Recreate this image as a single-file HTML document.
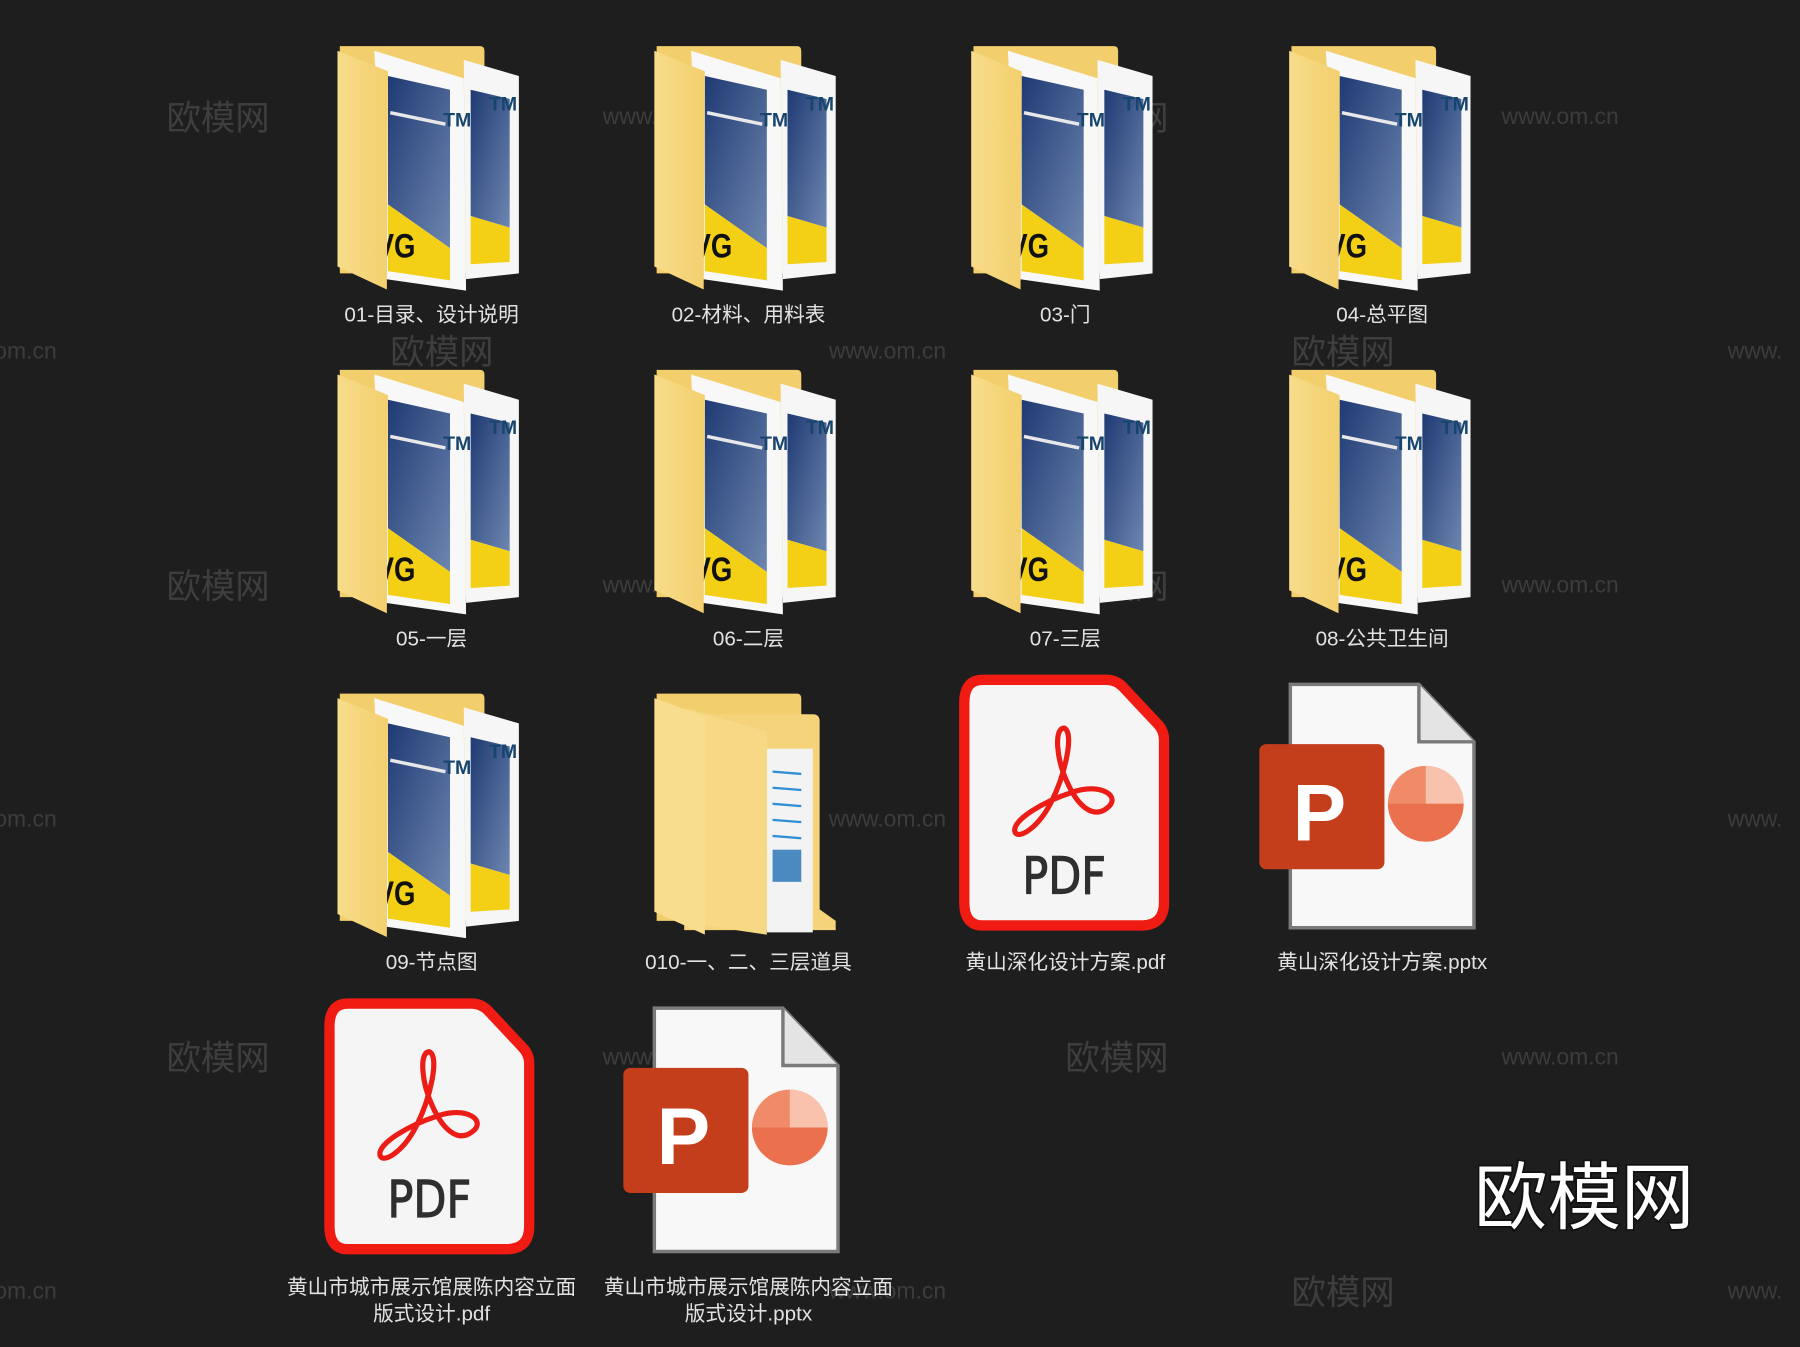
<!DOCTYPE html>
<html><head><meta charset="utf-8"><style>
html,body{margin:0;padding:0;background:#1e1e1e;overflow:hidden}
svg{display:block}
.l{font-family:"Liberation Sans","Noto Sans CJK SC",sans-serif;font-size:18px;fill:#e2e2e2;text-anchor:middle}
.w{font-family:"Noto Sans CJK SC",sans-serif;font-size:30px;fill:#3e3e3e}
.u{font-family:"Liberation Sans",sans-serif;font-size:20px;fill:#3c3c3c}
</style></head><body>
<svg width="1800" height="1347" viewBox="0 0 1568 1173" xmlns="http://www.w3.org/2000/svg">
<defs>
<linearGradient id="bl" x1="0" y1="0" x2="1" y2="1"><stop offset="0" stop-color="#1f3a73"/><stop offset="1" stop-color="#6d86b0"/></linearGradient>
<linearGradient id="fy" x1="0" y1="0" x2="1" y2="0"><stop offset="0" stop-color="#f7dc8a"/><stop offset="1" stop-color="#f3d06e"/></linearGradient>
<symbol id="fold" viewBox="0 0 165 220" width="165" height="220">
<path d="M4,2 H126 Q130,2 130,6 V200 H4 Z" fill="#f2cf6c"/>
<polygon points="112,14 160,28 160,200 114,205" fill="#f6f6f6"/>
<polygon points="118,40 152,48 152,160 118,150" fill="url(#bl)"/>
<polygon points="118,150 152,160 152,190 118,192" fill="#f3cf16"/>
<text x="134" y="58" font-family="Liberation Sans" font-weight="bold" font-size="17" fill="#17456e">TM</text>
<polygon points="34,6 112,30 114,215 44,205" fill="#f8f8f8"/>
<polygon points="46,28 100,40 100,178 46,140" fill="url(#bl)"/>
<polygon points="46,140 100,178 100,206 46,198" fill="#f3cf16"/>
<line x1="48" y1="60" x2="96" y2="70" stroke="#e8e8e8" stroke-width="3"/>
<text x="94" y="72" font-family="Liberation Sans" font-weight="bold" font-size="17" fill="#17456e">TM</text>
<text x="44" y="186" font-family="Liberation Sans" font-weight="bold" font-size="30" fill="#111" transform="scale(0.8,1)" >VG</text>
<polygon points="2,6 46,24 45,214 2,194" fill="url(#fy)"/>
</symbol>
<symbol id="pdf" viewBox="0 0 186 226" width="186" height="226">
<path d="M22,6 H130 Q138,6 144,12 L174,44 Q180,50 180,58 V200 Q180,220 160,220 H22 Q6,220 6,200 V26 Q6,6 22,6 Z" fill="#f5f5f5" stroke="#f01c14" stroke-width="9"/>
<path d="M93,48 C84,48 86,75 96,96 C105,116 118,127 130,118 C144,108 125,95 100,104 C75,112 48,128 50,138 C52,146 70,136 82,112 C94,88 102,52 93,48 Z" fill="none" stroke="#ec1c16" stroke-width="4.5"/>
<text x="93" y="192" text-anchor="middle" font-family="DejaVu Sans" font-size="44" fill="#2f2f2f" stroke="#2f2f2f" stroke-width="1" transform="translate(93,0) scale(0.85,1) translate(-93,0)">PDF</text>
</symbol>
<symbol id="ppt" viewBox="0 0 190 220" width="190" height="220">
<path d="M28,2 H140 L188,52 V214 H28 Z" fill="#f8f8f8" stroke="#7a7a7a" stroke-width="3"/>
<path d="M140,2 V52 H188" fill="#e4e4e4" stroke="#7a7a7a" stroke-width="3"/>
<rect x="1" y="54" width="109" height="109" rx="6" fill="#c43e1c"/>
<text x="30" y="138" font-family="Liberation Sans" font-weight="bold" font-size="70" fill="#fff">P</text>
<circle cx="146" cy="106" r="33" fill="#f08a68"/>
<path d="M146,106 V73 A33,33 0 0,1 179,106 Z" fill="#f9c2ac"/>
<path d="M146,106 H179 A33,33 0 0,1 146,139 A33,33 0 0,1 113,106 Z" fill="#e8613e" opacity="0.6"/>
</symbol>
<symbol id="pf" viewBox="0 0 165 215" width="165" height="215">
<path d="M4,2 H126 Q130,2 130,6 V200 H4 Z" fill="#f2cf6c"/>
<path d="M28,20 H140 Q146,20 146,26 V190 L160,200 V208 H28 Z" fill="#f4d37a"/>
<rect x="100" y="50" width="40" height="160" fill="#f3f3f3"/>
<g stroke="#2f8fd6" stroke-width="2"><line x1="105" y1="70" x2="130" y2="72"/><line x1="105" y1="84" x2="130" y2="86"/><line x1="105" y1="98" x2="130" y2="100"/><line x1="105" y1="112" x2="130" y2="114"/><line x1="105" y1="126" x2="130" y2="128"/></g>
<rect x="105" y="138" width="25" height="28" fill="#4a8ac0"/>
<polygon points="30,15 100,35 100,212 32,202" fill="#f6d885"/>
<polygon points="2,6 46,22 46,212 2,192" fill="#f8dd8e"/>
</symbol>
</defs>
<rect width="1568" height="1173" fill="#1e1e1e"/>
<g>
<text class="w" x="145" y="113">欧模网</text><text class="u" x="525" y="108">www.om.cn</text><text class="w" x="928" y="113">欧模网</text><text class="u" x="1308" y="108">www.om.cn</text>
<text class="u" x="-5" y="312">om.cn</text><text class="w" x="340" y="317">欧模网</text><text class="u" x="722" y="312">www.om.cn</text><text class="w" x="1125" y="317">欧模网</text><text class="u" x="1505" y="312">www.</text>
<text class="w" x="145" y="521">欧模网</text><text class="u" x="525" y="516">www.om.cn</text><text class="w" x="928" y="521">欧模网</text><text class="u" x="1308" y="516">www.om.cn</text>
<text class="u" x="-5" y="720">om.cn</text><text class="w" x="340" y="725">欧模网</text><text class="u" x="722" y="720">www.om.cn</text><text class="w" x="1125" y="725">欧模网</text><text class="u" x="1505" y="720">www.</text>
<text class="w" x="145" y="932">欧模网</text><text class="u" x="525" y="927">www.om.cn</text><text class="w" x="928" y="932">欧模网</text><text class="u" x="1308" y="927">www.om.cn</text>
<text class="u" x="-5" y="1131">om.cn</text><text class="u" x="722" y="1131">www.om.cn</text><text class="w" x="1125" y="1136">欧模网</text><text class="u" x="1505" y="1131">www.</text>
</g>
<use href="#fold" x="292" y="38"/><use href="#fold" x="568" y="38"/><use href="#fold" x="844" y="38"/><use href="#fold" x="1121" y="38"/>
<use href="#fold" x="292" y="320"/><use href="#fold" x="568" y="320"/><use href="#fold" x="844" y="320"/><use href="#fold" x="1121" y="320"/>
<use href="#fold" x="292" y="602"/><use href="#pf" x="568" y="602"/>
<use href="#pdf" x="834" y="586"/><use href="#ppt" x="1096" y="594"/>
<use href="#pdf" x="281" y="868"/><use href="#ppt" x="542" y="876"/>
<text class="l" x="376" y="280">01-目录、设计说明</text><text class="l" x="652" y="280">02-材料、用料表</text><text class="l" x="928" y="280">03-门</text><text class="l" x="1204" y="280">04-总平图</text>
<text class="l" x="376" y="562">05-一层</text><text class="l" x="652" y="562">06-二层</text><text class="l" x="928" y="562">07-三层</text><text class="l" x="1204" y="562">08-公共卫生间</text>
<text class="l" x="376" y="844">09-节点图</text><text class="l" x="652" y="844">010-一、二、三层道具</text><text class="l" x="928" y="844">黄山深化设计方案.pdf</text><text class="l" x="1204" y="844">黄山深化设计方案.pptx</text>
<text class="l" x="376" y="1127">黄山市城市展示馆展陈内容立面</text><text class="l" x="376" y="1150">版式设计.pdf</text>
<text class="l" x="652" y="1127">黄山市城市展示馆展陈内容立面</text><text class="l" x="652" y="1150">版式设计.pptx</text>
<text x="1380" y="1065" text-anchor="middle" font-family="Noto Sans CJK SC,sans-serif" font-size="64" fill="#fff" stroke="#111" stroke-width="3" paint-order="stroke">欧模网</text>
</svg>
</body></html>
